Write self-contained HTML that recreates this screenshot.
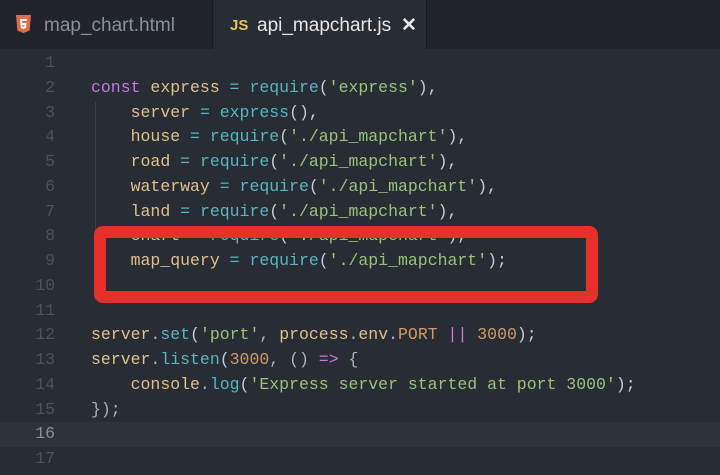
<!DOCTYPE html>
<html><head><style>
body{margin:0;width:720px;height:475px;background:#282c34;overflow:hidden;font-family:"Liberation Mono",monospace;position:relative}
.tabs{position:absolute;left:0;top:0;width:720px;height:49px;background:#21252b}
.tab{position:absolute;top:0;height:49px;font-family:"Liberation Sans",sans-serif;font-size:19px;line-height:51px}
.t1{left:0;width:212px;color:#8a8f98;border-right:1px solid #181a1f}
.t2{left:213px;width:213px;background:#282c34;color:#e6e6e6;border-right:1px solid #181a1f}
.code{position:absolute;left:0;top:51px;width:720px}
.l{height:24.75px;line-height:24.75px;font-size:16.5px;white-space:pre;color:#abb2bf;position:relative}
.n{display:inline-block;width:55px;text-align:right;color:#4b5263;margin-right:36px}
.hl{background:#2e323a}
.k{color:#c678dd}.v{color:#e0c08b}.o{color:#56b6c2}.f{color:#61afef}.s{color:#98c379}.d{color:#d19a66}.p{color:#c7cbd3}
.box{position:absolute;left:94px;top:226px;width:480px;height:53px;border:12px solid #e8302a;border-radius:9px}
.guide{position:absolute;left:95px;top:102px;width:1px;height:198px;background:#3b4048}
</style></head><body>
<div class="tabs">
<div class="tab t1"><svg style="position:absolute;left:16px;top:15px" width="15" height="18" viewBox="0 0 15 18"><path d="M0 0h15l-1.4 15.5L7.5 18 1.4 15.5z" fill="#e06c4b"/><path d="M4 4h7l-.3 2H6l.2 2h4.3l-.4 5-2.6 1-2.6-1-.2-2.5h2l.1 1 .7.3.8-.3.1-1.5H4.4z" fill="#fff"/></svg><span style="position:absolute;left:44px">map_chart.html</span></div>
<div class="tab t2"><span style="position:absolute;left:17px;color:#e5c454;font-weight:bold;font-size:15px">JS</span><span style="position:absolute;left:44px">api_mapchart.js</span><span style="position:absolute;left:188px;font-weight:bold">✕</span></div>
</div>
<div class="guide"></div>
<div class="code">
<div class="l"><span class="n">1</span></div>
<div class="l"><span class="n">2</span><span class="k">const</span> <span class="v">express</span> <span class="o">=</span> <span class="o">require</span><span class="p">(</span><span class="s">'express'</span><span class="p">),</span></div>
<div class="l"><span class="n">3</span>    <span class="v">server</span> <span class="o">=</span> <span class="o">express</span><span class="p">(),</span></div>
<div class="l"><span class="n">4</span>    <span class="v">house</span> <span class="o">=</span> <span class="o">require</span><span class="p">(</span><span class="s">'./api_mapchart'</span><span class="p">),</span></div>
<div class="l"><span class="n">5</span>    <span class="v">road</span> <span class="o">=</span> <span class="o">require</span><span class="p">(</span><span class="s">'./api_mapchart'</span><span class="p">),</span></div>
<div class="l"><span class="n">6</span>    <span class="v">waterway</span> <span class="o">=</span> <span class="o">require</span><span class="p">(</span><span class="s">'./api_mapchart'</span><span class="p">),</span></div>
<div class="l"><span class="n">7</span>    <span class="v">land</span> <span class="o">=</span> <span class="o">require</span><span class="p">(</span><span class="s">'./api_mapchart'</span><span class="p">),</span></div>
<div class="l"><span class="n">8</span>    <span class="v">chart</span> <span class="o">=</span> <span class="o">require</span><span class="p">(</span><span class="s">'./api_mapchart'</span><span class="p">),</span></div>
<div class="l"><span class="n">9</span>    <span class="v">map_query</span> <span class="o">=</span> <span class="o">require</span><span class="p">(</span><span class="s">'./api_mapchart'</span><span class="p">);</span></div>
<div class="l"><span class="n">10</span></div>
<div class="l"><span class="n">11</span></div>
<div class="l"><span class="n">12</span><span class="v">server</span>.<span class="o">set</span><span class="p">(</span><span class="s">'port'</span>, <span class="v">process</span>.<span class="v">env</span>.<span class="d">PORT</span> <span class="k">||</span> <span class="d">3000</span><span class="p">);</span></div>
<div class="l"><span class="n">13</span><span class="v">server</span>.<span class="o">listen</span><span class="p">(</span><span class="d">3000</span>, () <span class="k">=&gt;</span> {</div>
<div class="l"><span class="n">14</span>    <span class="v">console</span>.<span class="o">log</span><span class="p">(</span><span class="s">'Express server started at port 3000'</span><span class="p">);</span></div>
<div class="l"><span class="n">15</span>});</div>
<div class="l hl"><span class="n" style="color:#8a909a">16</span></div>
<div class="l"><span class="n">17</span></div>
</div>
<div class="box"></div>
</body></html>
